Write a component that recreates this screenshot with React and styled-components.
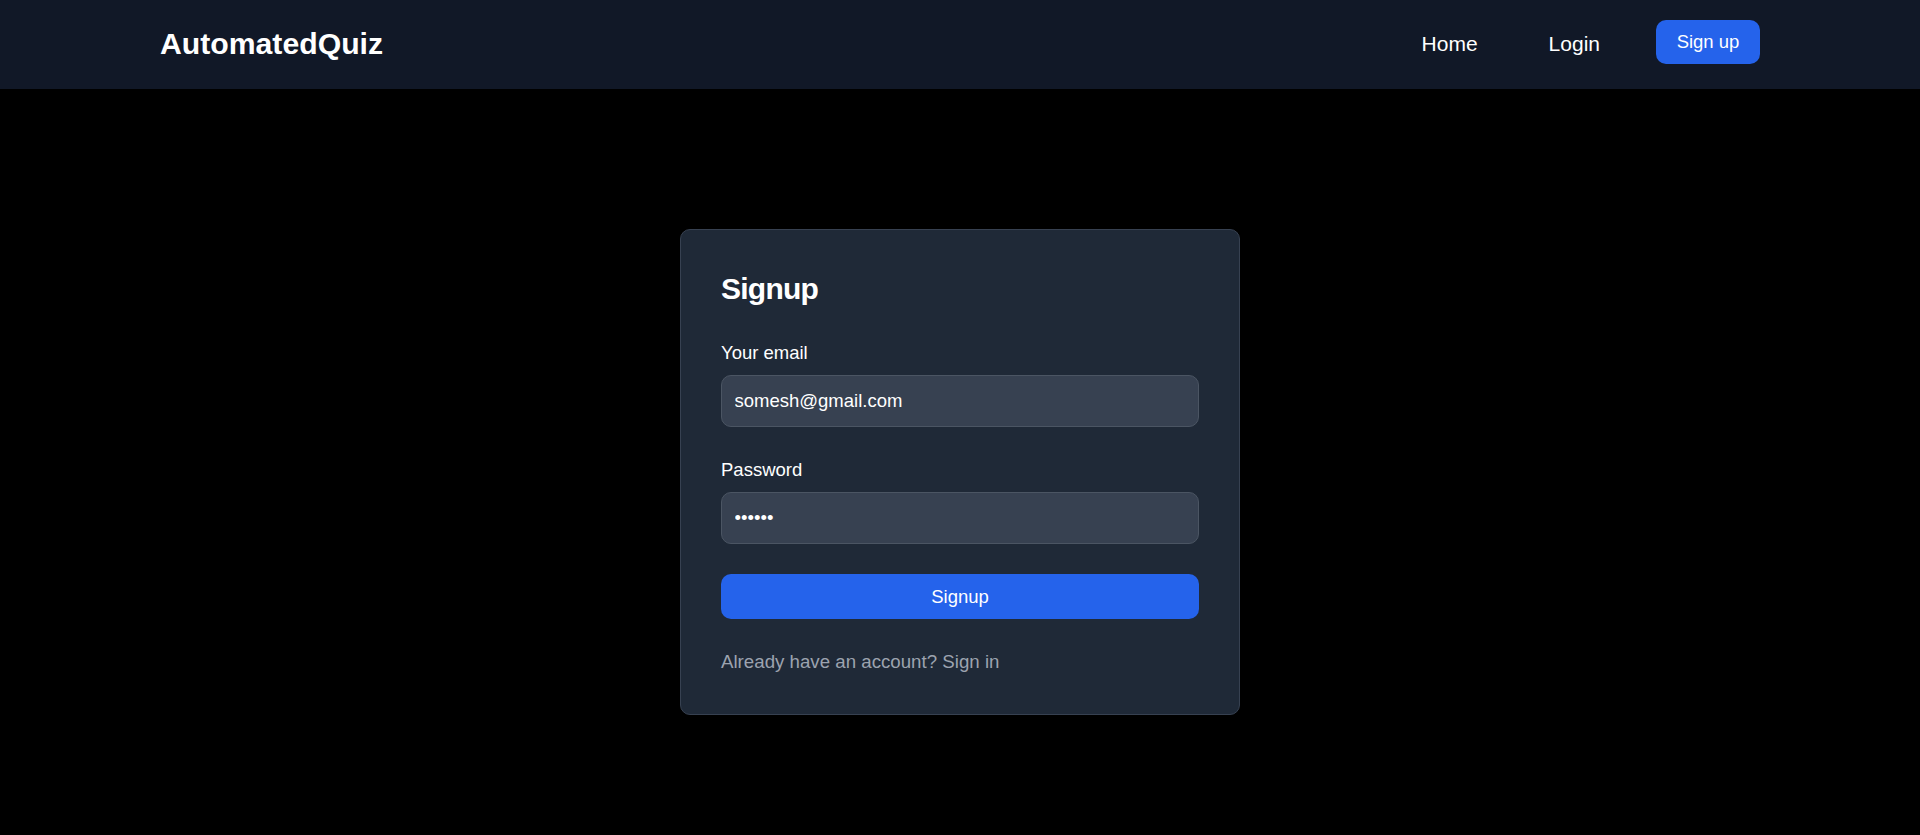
import React from 'react';
import styled, { createGlobalStyle } from 'styled-components';

const GlobalStyle = createGlobalStyle`
  html, body {
    margin: 0;
    padding: 0;
    background: #000;
  }
  body {
    font-family: "Liberation Sans", Arial, sans-serif;
    color: #fff;
  }
  * {
    box-sizing: border-box;
  }
`;

const Page = styled.div`
  min-height: 835px;
  background: #000;
`;

const Navbar = styled.header`
  background: #111827;
  height: 89px;
`;

const NavInner = styled.div`
  max-width: 1600px;
  height: 100%;
  margin: 0 auto;
  display: flex;
  align-items: center;
  justify-content: space-between;
`;

const Logo = styled.a`
  font-size: 30.2px;
  font-weight: 700;
  color: #fff;
  text-decoration: none;
  line-height: 1;
`;

const NavList = styled.nav`
  display: flex;
  align-items: center;
  gap: 41px;
`;

const NavLink = styled.a`
  font-size: 21px;
  line-height: 25px;
  color: #fff;
  padding: 8px 15px;
  text-decoration: none;
  margin-bottom: 3px;
`;

const NavButton = styled.a`
  display: inline-flex;
  align-items: center;
  justify-content: center;
  min-width: 104px;
  height: 44px;
  padding: 0 20px;
  background: #2563eb;
  color: #fff;
  font-size: 18.5px;
  border-radius: 10px;
  text-decoration: none;
  margin-bottom: 6px;
`;

const Main = styled.main`
  display: flex;
  justify-content: center;
  padding-top: 140px;
`;

const Card = styled.section`
  width: 560px;
  background: #1f2937;
  border: 1px solid #374151;
  border-radius: 10px;
  padding: 40px;
`;

const Title = styled.h1`
  margin: 0 0 32.5px;
  font-size: 30px;
  font-weight: 700;
  line-height: 1.25;
  letter-spacing: -0.75px;
  color: #fff;
`;

const Form = styled.form`
  display: flex;
  flex-direction: column;
  gap: 30px;
`;

const Field = styled.div`
  display: flex;
  flex-direction: column;
`;

const Label = styled.label`
  font-size: 18.5px;
  line-height: 25px;
  color: #fff;
  margin-bottom: 10px;
`;

const Input = styled.input`
  width: 100%;
  height: 52px;
  padding: 0 12.5px;
  background: #374151;
  border: 1px solid #4b5563;
  border-radius: 10px;
  color: #fff;
  font-family: "Liberation Sans", Arial, sans-serif;
  font-size: 18.5px;
  outline: none;
`;

const SubmitButton = styled.button`
  width: 100%;
  height: 45px;
  border: 0;
  border-radius: 10px;
  background: #2563eb;
  color: #fff;
  font-family: "Liberation Sans", Arial, sans-serif;
  font-size: 18.5px;
  cursor: pointer;
`;

const Hint = styled.p`
  margin: 0;
  font-size: 18.7px;
  line-height: 25px;
  color: #9ca3af;
`;

const HintLink = styled.a`
  color: #9ca3af;
  text-decoration: none;
`;

const App = () => (
  <Page>
    <GlobalStyle />
    <Navbar>
      <NavInner>
        <Logo href="#">AutomatedQuiz</Logo>
        <NavList>
          <NavLink href="#">Home</NavLink>
          <NavLink href="#">Login</NavLink>
          <NavButton href="#">Sign up</NavButton>
        </NavList>
      </NavInner>
    </Navbar>
    <Main>
      <Card>
        <Title>Signup</Title>
        <Form onSubmit={(e) => e.preventDefault()}>
          <Field>
            <Label htmlFor="email">Your email</Label>
            <Input id="email" type="email" defaultValue="somesh@gmail.com" />
          </Field>
          <Field>
            <Label htmlFor="password">Password</Label>
            <Input id="password" type="password" defaultValue="123456" />
          </Field>
          <SubmitButton type="submit">Signup</SubmitButton>
          <Hint>
            Already have an account? <HintLink href="#">Sign in</HintLink>
          </Hint>
        </Form>
      </Card>
    </Main>
  </Page>
);

export default App;
